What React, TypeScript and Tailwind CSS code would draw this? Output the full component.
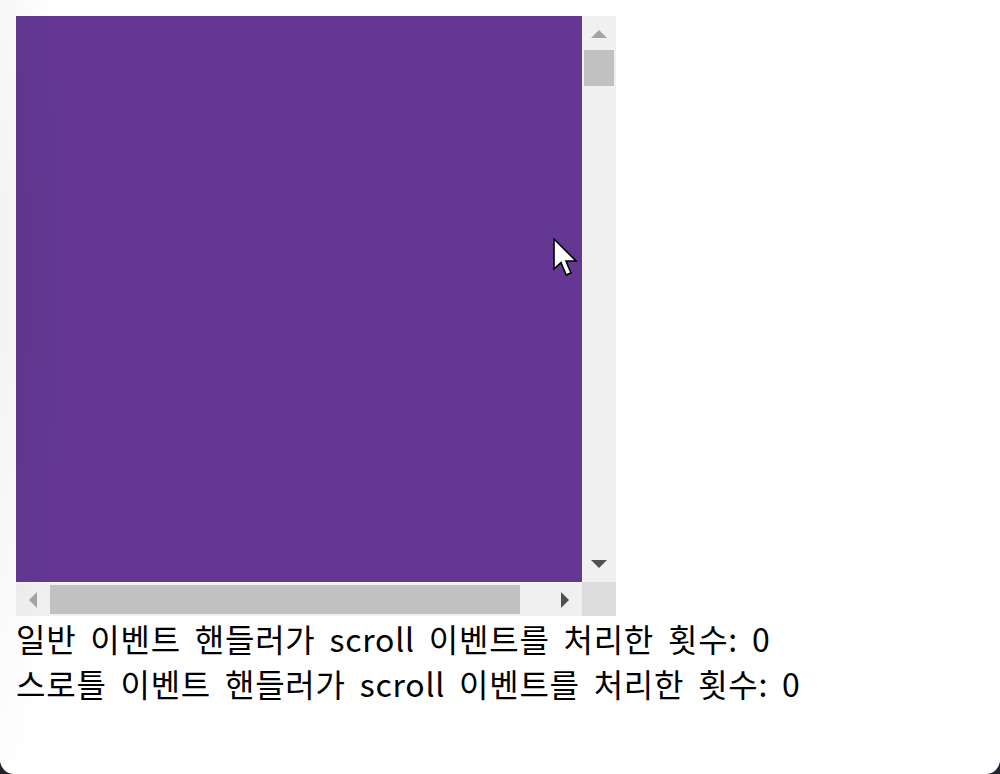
import React from "react";

function Tri({ dir, color }: { dir: "up" | "down" | "left" | "right"; color: string }) {
  const pts =
    dir === "up"
      ? "0,8 8,0 16,8"
      : dir === "down"
      ? "0,0 16,0 8,8"
      : dir === "left"
      ? "8,0 8,16 0,8"
      : "0,0 0,16 8,8";
  const w = dir === "up" || dir === "down" ? 16 : 8;
  const h = dir === "up" || dir === "down" ? 8 : 16;
  return (
    <svg width={w} height={h} viewBox={`0 0 ${w} ${h}`} className="block">
      <polygon points={pts} fill={color} />
    </svg>
  );
}

export default function App() {
  return (
    <div className="relative w-[1000px] h-[774px] bg-[#222230] overflow-hidden">
      <div
        className="relative h-full bg-white rounded-b-[14px] px-[16px] pt-[16px] text-black"
        style={{ fontFamily: '"Noto Sans CJK KR", "Noto Sans", sans-serif' }}
      >
        <div className="grid w-[600px] h-[600px] grid-cols-[566px_34px] grid-rows-[566px_34px]">
          <div className="bg-[#633792]" />
          <div className="bg-[#f0f0f0] flex flex-col items-center">
            <div className="h-[34px] flex items-center justify-center pt-[2px]">
              <Tri dir="up" color="#a3a3a3" />
            </div>
            <div className="w-[30px] h-[36px] bg-[#c1c1c1]" />
            <div className="flex-1" />
            <div className="h-[34px] flex items-start justify-center pt-[12px]">
              <Tri dir="down" color="#505050" />
            </div>
          </div>
          <div className="bg-[#f0f0f0] flex items-center border-t border-[#f6f6f6]">
            <div className="w-[34px] flex justify-center">
              <Tri dir="left" color="#a3a3a3" />
            </div>
            <div className="w-[470px] h-[29px] bg-[#c1c1c1]" />
            <div className="flex-1 flex justify-start pl-[41px]">
              <Tri dir="right" color="#505050" />
            </div>
          </div>
          <div className="bg-[#dcdcdc]" />
        </div>
        <div className="text-[32px] leading-[45px] tracking-[0.75px] [word-spacing:6px]">
          <div>일반 이벤트 핸들러가 scroll 이벤트를 처리한 횟수: 0</div>
          <div>스로틀 이벤트 핸들러가 scroll 이벤트를 처리한 횟수: 0</div>
        </div>
      </div>
      <div className="pointer-events-none absolute left-0 top-0 w-[80px] h-[774px] bg-[radial-gradient(ellipse_60px_560px_at_0%_35%,rgba(0,0,0,0.05),transparent)]" />
      <svg
        className="pointer-events-none absolute left-[553px] top-[238px]"
        width="26"
        height="40"
        viewBox="0 0 13 20"
      >
        <path
          d="M0.5 0.5 L0.5 15.5 L4 12.3 L6.6 18.5 L9 17.5 L6.5 11.5 L11.5 11.5 Z"
          fill="#fff"
          stroke="#000"
          strokeWidth="0.8"
          strokeLinejoin="miter"
        />
      </svg>
    </div>
  );
}
